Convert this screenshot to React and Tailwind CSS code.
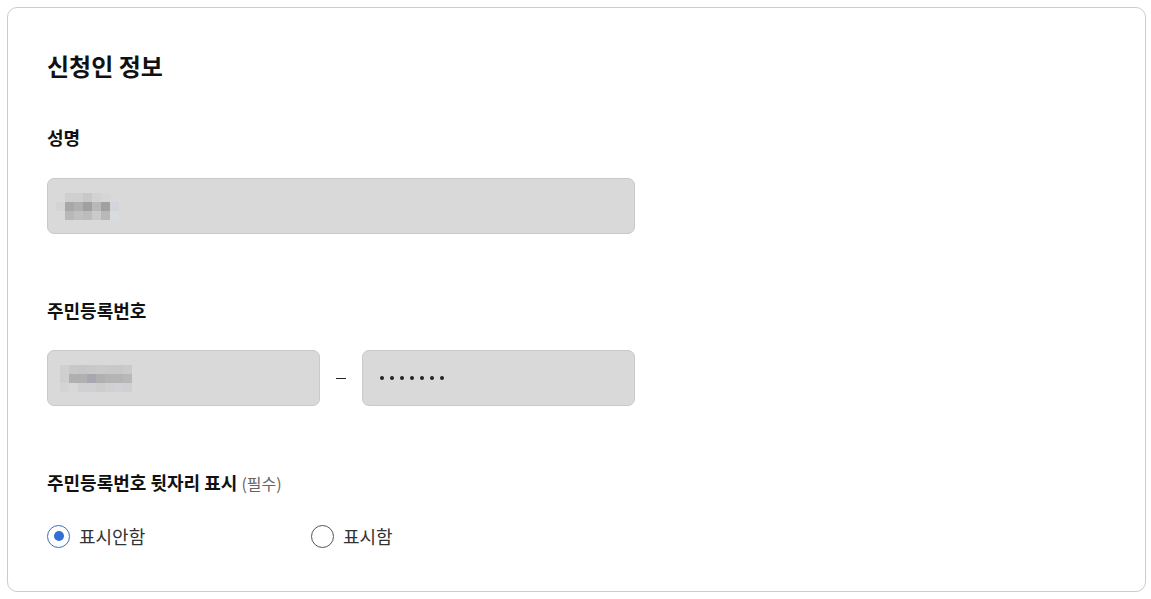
import React from "react";

const nameMosaic = [
  ["bg-transparent", "bg-[#cfcfcf]", "bg-[#cfcfcf]", "bg-[#c8c8c8]", "bg-[#d2d2d2]", "bg-[#d6d6d6]", "bg-transparent"],
  ["bg-[#d4d4d4]", "bg-[#a8a8a8]", "bg-[#b0b0b0]", "bg-[#a0a0a0]", "bg-[#b8b8b8]", "bg-[#a0a0a0]", "bg-[#d2d6da]"],
  ["bg-transparent", "bg-[#b8b8b8]", "bg-[#c0c0c0]", "bg-[#bcbcbc]", "bg-[#cacaca]", "bg-[#b8b8b8]", "bg-[#d8dce0]"],
];

const rrnMosaic = [
  ["bg-[#d0d0d0]", "bg-[#c8c8c8]", "bg-[#c6c6c6]", "bg-[#c8c8c8]", "bg-[#cacaca]", "bg-[#c8c8c8]", "bg-[#c8c8c8]", "bg-[#cacaca]"],
  ["bg-[#cfcfcf]", "bg-[#b0b0b0]", "bg-[#b0b0b0]", "bg-[#a8a8b2]", "bg-[#b0b0b0]", "bg-[#b4b4b4]", "bg-[#b4b4b4]", "bg-[#b8b8b8]"],
  ["bg-[#d4d4d4]", "bg-[#d8d8d8]", "bg-[#d0d0d4]", "bg-[#d0d0d0]", "bg-[#cdcdd0]", "bg-[#d0d0d0]", "bg-[#d2d2d4]", "bg-[#d0d0d4]"],
];

const Mosaic = ({ rows }) => (
  <div className="flex flex-col">
    {rows.map((row, i) => (
      <div key={i} className="flex">
        {row.map((cls, j) => (
          <span key={j} className={`block h-[9px] w-[9px] ${cls}`} />
        ))}
      </div>
    ))}
  </div>
);

const Field = ({ className = "", children }) => (
  <div
    className={`flex h-[56px] items-center rounded-[7px] border border-[#c9c9c9] bg-[#d9d9d9] ${className}`}
  >
    {children}
  </div>
);

const Radio = ({ checked, label }) => (
  <label className="flex items-center gap-[9px]">
    <span
      className={`flex h-[23px] w-[23px] items-center justify-center rounded-full border-[1.5px] bg-white ${
        checked ? "border-[#2f6fd6]" : "border-[#555555]"
      }`}
    >
      {checked && <span className="h-[10px] w-[10px] rounded-full bg-[#2f6fd6]" />}
    </span>
    <span className="text-[18px] leading-[24px] text-[#333333]">{label}</span>
  </label>
);

export default function App() {
  return (
    <div className="min-h-[599px] bg-white p-[7px] font-['Noto_Sans_CJK_KR',sans-serif]">
      <section className="h-[585px] w-[1139px] rounded-[10px] border border-[#cccccc] bg-white px-[39px] pt-[42px]">
        <h2 className="text-[24px] font-bold leading-[32px] text-[#111111]">신청인 정보</h2>

        <h3 className="mt-[43px] text-[18px] font-bold leading-[24px] text-[#111111]">성명</h3>
        <Field className="mt-[29px] w-[588px] pl-[8px]">
          <Mosaic rows={nameMosaic} />
        </Field>

        <h3 className="mt-[64px] text-[18px] font-bold leading-[24px] text-[#111111]">주민등록번호</h3>
        <div className="mt-[28px] flex w-[588px] items-center">
          <Field className="w-[273px] pl-[12px]">
            <Mosaic rows={rrnMosaic} />
          </Field>
          <div className="flex flex-1 justify-center">
            <span className="h-[1px] w-[10px] bg-[#222222]" />
          </div>
          <Field className="w-[273px] gap-[6px] pl-[17px]">
            {Array.from({ length: 7 }).map((_, i) => (
              <span key={i} className="h-[4px] w-[4px] rounded-full bg-[#222222]" />
            ))}
          </Field>
        </div>

        <h3 className="mt-[64px] text-[18px] font-bold leading-[24px] text-[#111111]">
          주민등록번호 뒷자리 표시{" "}
          <span className="text-[16px] font-normal text-[#666666]">(필수)</span>
        </h3>
        <div className="mt-[29px] flex items-center">
          <div className="w-[264px]">
            <Radio checked label="표시안함" />
          </div>
          <Radio label="표시함" />
        </div>
      </section>
    </div>
  );
}
